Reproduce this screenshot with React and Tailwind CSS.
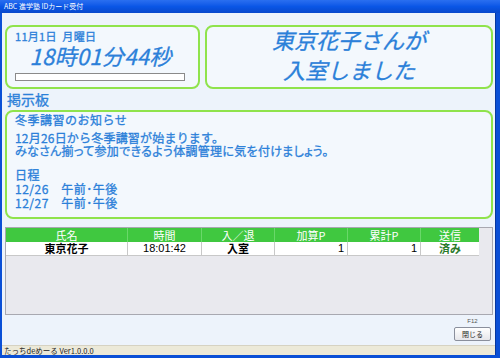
import React from "react";

const jp = "font-['Noto_Sans_CJK_JP','Noto_Sans',sans-serif]";
const thick = "[-webkit-text-stroke:0.3px_#2b80d9]";

export default function App() {
  return (
    <div className={`w-[500px] h-[358px] flex flex-col overflow-hidden bg-[#0b4fd6] ${jp}`}>
      {/* title bar */}
      <div className="h-[13px] flex items-center px-[4px] bg-gradient-to-b from-[#2a6ff0] via-[#0a56e6] to-[#0848cc]">
        <span className="text-[7px] leading-none text-white">ABC 進学塾 IDカード受付</span>
      </div>
      <div className="flex-1 flex min-h-0">
        <div className="w-[2px] bg-[#0a4fd6]" />
        <div className="flex-1 flex flex-col bg-[#edf3fb] min-w-0">
          <div className="flex-1 flex flex-col pl-[3px] pr-[2px] pt-[12px]">
            {/* top cards */}
            <div className="flex gap-[5px] h-[64px]">
              <div className="w-[195px] rounded-[8px] border-2 border-[#8fe34c] bg-[#f3f8fd] flex flex-col px-[8px] pt-[3px]">
                <div className={`text-[11px] leading-[13px] text-[#2b80d9] tracking-[0.3px] ${thick}`}>11月1日&nbsp;&nbsp;月曜日</div>
                <div className={`text-[22px] leading-[24px] italic text-[#2b80d9] text-center pr-[4px] tracking-[0.3px] ${thick}`}>18時01分44秒</div>
                <div className="mt-[6px] h-[8px] w-[170px] border border-[#8a8a8a] bg-white" />
              </div>
              <div className="flex-1 rounded-[8px] border-2 border-[#8fe34c] bg-[#f3f8fd] flex flex-col items-center justify-center pb-[6px]">
                <div className={`text-[22px] leading-[30px] italic text-[#2b80d9] text-center ${thick}`}>
                  東京花子さんが<br />入室しました
                </div>
              </div>
            </div>
            {/* bulletin label */}
            <div className="h-[21px] flex items-center pl-[2px] pb-[2px]">
              <span className={`text-[14px] leading-none text-[#2b80d9] ${thick}`}>掲示板</span>
            </div>
            {/* bulletin card */}
            <div className={`h-[109px] rounded-[8px] border-2 border-[#8fe34c] bg-[#f3f8fd] px-[8px] pt-[1px] text-[#2b80d9] ${thick}`}>
              <div className="text-[12px] leading-[14px] tracking-[0.5px]">冬季講習のお知らせ</div>
              <div className="mt-[4px] text-[12px] leading-[13px]">
                <div className="tracking-[0.2px]">12月26日から冬季講習が始まります。</div>
                <div className="[font-feature-settings:'palt'] tracking-[0.3px]">みなさん揃って参加できるよう体調管理に気を付けましょう。</div>
              </div>
              <div className="mt-[11px] text-[12px] leading-[14px] tracking-[0.5px]">
                <div>日程</div>
                <div className="whitespace-pre">12/26　午前･午後</div>
                <div className="whitespace-pre">12/27　午前･午後</div>
              </div>
            </div>
            {/* table */}
            <div className="mt-[8px] h-[88px] border border-[#a8a8b0] bg-[#e9e9ee] flex flex-col">
              <div className="flex w-[473px] h-[14px] bg-[#40c840] text-white text-[11px] leading-[14px]">
                <div className="w-[122px] text-center border-r border-[#6ad86a]">氏名</div>
                <div className="w-[74px] text-center border-r border-[#6ad86a]">時間</div>
                <div className="w-[73px] text-center border-r border-[#6ad86a]">入／退</div>
                <div className="w-[73px] text-center border-r border-[#6ad86a]">加算P</div>
                <div className="w-[73px] text-center border-r border-[#6ad86a]">累計P</div>
                <div className="flex-1 text-center">送信</div>
              </div>
              <div className="flex w-[473px] h-[14px] bg-white text-black text-[11px] leading-[13px] border-b border-[#c8c8c8]">
                <div className="w-[122px] text-center border-r border-[#c8c8c8] font-bold">東京花子</div>
                <div className="w-[74px] text-center border-r border-[#c8c8c8] font-['Liberation_Sans',sans-serif] text-[11px]">18:01:42</div>
                <div className="w-[73px] text-center border-r border-[#c8c8c8] font-bold">入室</div>
                <div className="w-[73px] text-right pr-[3px] border-r border-[#c8c8c8] font-['Liberation_Sans',sans-serif]">1</div>
                <div className="w-[73px] text-right pr-[3px] border-r border-[#c8c8c8] font-['Liberation_Sans',sans-serif]">1</div>
                <div className="flex-1 text-center text-[#2a7a2a] font-bold">済み</div>
              </div>
            </div>
            {/* bottom buttons */}
            <div className="flex-1 flex justify-end pr-[2px]">
              <div className="flex flex-col items-center pt-[2px]">
                <span className="text-[6px] leading-[8px] text-[#555] font-['Liberation_Sans',sans-serif]">F12</span>
                <button className="mt-[2px] w-[37px] h-[14px] rounded-[2px] border border-[#8a8f9c] bg-gradient-to-b from-white to-[#e6e6ea] text-[7px] leading-none text-[#222]">閉じる</button>
              </div>
            </div>
          </div>
          {/* status bar */}
          <div className="h-[10px] bg-[#ece9d8] border-t border-[#d6d2c2] flex items-center px-[2px]">
            <span className="text-[7.5px] leading-none text-[#222]">たっちdeめーる Ver1.0.0.0</span>
          </div>
        </div>
        <div className="w-[5px] bg-[#0a4fd6] border-l border-[#06379e]" />
      </div>
      <div className="h-[3px] bg-[#0a4fd6]" />
    </div>
  );
}
